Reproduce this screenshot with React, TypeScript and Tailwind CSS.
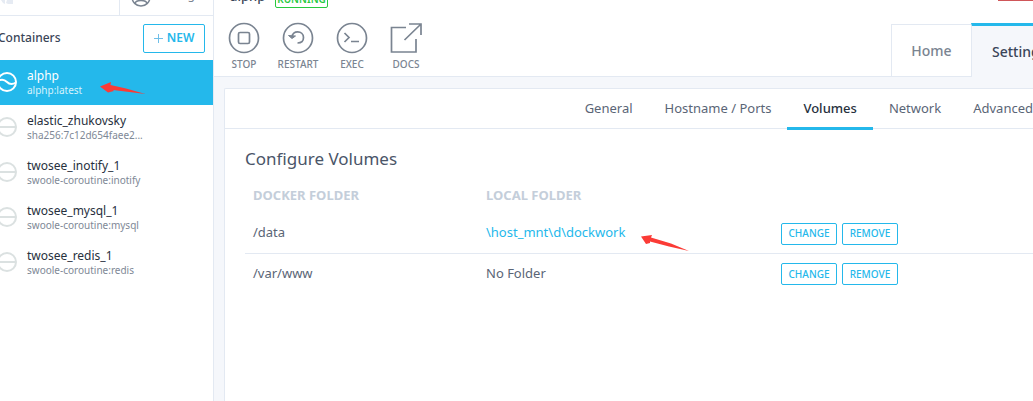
import React from "react";

type Container = { name: string; image: string };

const containers: Container[] = [
  { name: "alphp", image: "alphp:latest" },
  { name: "elastic_zhukovsky", image: "sha256:7c12d654faee2..." },
  { name: "twosee_inotify_1", image: "swoole-coroutine:inotify" },
  { name: "twosee_mysql_1", image: "swoole-coroutine:mysql" },
  { name: "twosee_redis_1", image: "swoole-coroutine:redis" },
];

const volumes = [
  { docker: "/data", local: "\\host_mnt\\d\\dockwork" },
  { docker: "/var/www", local: null },
];

function StateIcon({ running }: { running: boolean }) {
  return (
    <svg width="20" height="20" viewBox="0 0 20 20" fill="none" stroke={running ? "#ffffff" : "#dbe1e1"} strokeWidth="2" className="-ml-[3px] shrink-0" aria-hidden="true">
      <circle cx="10" cy="10" r="9" />
      <path d={running ? "M1 9C5 6.500 7.500 7.500 10 10S15.500 12.500 19 10.500" : "M1 10H19"} />
    </svg>
  );
}

function ActionIcon({ kind }: { kind: string }) {
  return (
    <svg width="32" height="32" viewBox="0 0 32 32" fill="none" stroke="#7a8491" strokeWidth="1.700" aria-hidden="true">
      {kind !== "DOCS" && <circle cx="16" cy="16" r="14.500" />}
      {kind === "STOP" && <rect x="10.500" y="10.500" width="11" height="11" rx="1.500" />}
      {kind === "RESTART" && (
        <>
          <path d="M10 15C10 8 21.500 8 21.500 15.500C21.500 19 19 21 15.500 21" />
          <path d="M6.500 13.500L10 16.500L13.500 14Z" fill="#7a8491" strokeWidth="1" />
        </>
      )}
      {kind === "EXEC" && <path d="M8.500 11L13 15.500L8.500 20M15 19.500H23" />}
      {kind === "DOCS" && <path d="M16 5.500H1.500V30H26V17M19 2H31V13M30.500 2.500L14.500 18" />}
    </svg>
  );
}

function Arrow({ className, points, viewBox, width, height }: { className: string; points: string; viewBox: string; width: number; height: number }) {
  return (
    <svg className={className} width={width} height={height} viewBox={viewBox} aria-hidden="true">
      <polygon points={points} fill="#fb3b36" />
    </svg>
  );
}

function Sidebar() {
  return (
    <aside className="flex w-[214px] shrink-0 flex-col border-r border-[#e3e9f2] bg-white">
      <div className="flex h-4 items-end overflow-hidden border-b border-[#e3e9f2]">
        <div className="h-full w-[119px]">
          <svg width="14" height="5" viewBox="0 0 14 5" fill="#e6ebf3" aria-hidden="true">
            <path d="M1 0H5V4L3 3ZM7 0H13V4H8L6 3Z" />
          </svg>
        </div>
        <a href="#account" className="flex h-full flex-1 items-end border-l border-[#e3e9f2] pb-2 pl-[11px] text-[12px] leading-5 text-[#7a8491]">
          <svg width="20" height="20" viewBox="0 0 20 20" fill="none" stroke="#7a8491" strokeWidth="1.500" aria-hidden="true">
            <circle cx="10" cy="10" r="9" />
            <path d="M4 17C4 14 7 13.500 10 13.500S16 14 16 17" />
          </svg>
          <span className="pb-0.5 pl-1">Settings</span>
        </a>
      </div>
      <div className="flex h-11 items-center justify-between pr-2">
        <h2 className="-ml-0.5 text-[12px] font-medium text-[#3a4558]">Containers</h2>
        <button type="button" className="flex h-[29px] w-[62px] items-center justify-center gap-1 rounded-xs border border-[#24b8eb] text-[12px] font-semibold text-[#24b8eb]">
          <svg width="9" height="9" viewBox="0 0 9 9" stroke="#6fbfe8" aria-hidden="true">
            <path d="M4.500 0V9M0 4.500H9" />
          </svg>
          NEW
        </button>
      </div>
      <ul>
        {containers.map((c, i) => (
          <li key={c.name} className={i === 0 ? "relative bg-[#24b8eb]" : ""}>
            <a href={"#" + c.name} className="flex h-[45px] items-center gap-2.5 pb-0.5">
              <StateIcon running={i === 0} />
              <span className="flex flex-col pt-[3px]">
                <span className={"text-[12px] leading-[15px] " + (i === 0 ? "text-white" : "text-[#27303d]")}>{c.name}</span>
                <span className={"text-[10px] leading-[15px] " + (i === 0 ? "text-[#d6f2fc]" : "text-[#7e8896]")}>{c.image}</span>
              </span>
            </a>
            {i === 0 && <Arrow className="absolute left-[100px] top-[22px]" width={46} height={13} viewBox="0 0 46 13" points="0,4.500 11,0 10.500,3 26,6.500 45.500,12 13,8 14,9 8,10.500" />}
          </li>
        ))}
      </ul>
    </aside>
  );
}

function Header() {
  return (
    <header className="relative flex h-[77px] justify-between border-b border-[#e3e9f2] bg-white">
      <div className="-mt-3">
        <div className="flex h-5 items-end gap-2.5 pl-4">
          <h1 className="pb-0.5 text-[13px] font-medium leading-5 text-[#3a4558]">alphp</h1>
          <span className="rounded-xs border border-[#27c93f] px-px text-[10px] font-semibold leading-4 text-[#27c93f]">RUNNING</span>
        </div>
        <div className="flex pl-[3px] pt-3.5">
          {["STOP", "RESTART", "EXEC", "DOCS"].map((label) => (
            <button type="button" key={label} className="flex w-[54px] flex-col items-center gap-0.5 text-[10px] font-medium leading-4 text-[#7a8491]">
              <ActionIcon kind={label} />
              {label}
            </button>
          ))}
        </div>
      </div>
      <div className="absolute right-0 top-0 h-px w-[35px] bg-[#cf5659]" />
      <div className="flex items-end text-[14px] font-medium">
        <a href="#home" className="flex h-[52px] w-20 items-center justify-center border-l border-t border-[#e3e9f2] text-[#7a8491]">Home</a>
        <a href="#settings" className="-mb-px flex h-[54px] w-[62px] items-center overflow-hidden border-l border-t-3 border-l-[#e3e9f2] border-t-[#24b8eb] bg-[#f5f7fb] pl-5 text-[#3a4558]">Settings</a>
      </div>
    </header>
  );
}

function Volumes() {
  return (
    <section className="flex-1 pl-5 pt-5">
      <h2 className="text-[17px] leading-5 text-[#4a5568]">Configure Volumes</h2>
      <table className="mt-2.5 w-full table-fixed text-left text-[13px] text-[#5a6576]">
        <colgroup>
          <col className="w-[233px]" />
          <col className="w-[295px]" />
          <col />
        </colgroup>
        <thead>
          <tr className="h-[34px] text-[#c4ceda]">
            <th className="pl-2 font-bold">DOCKER FOLDER</th>
            <th className="pl-2 font-bold">LOCAL FOLDER</th>
            <th aria-label="Actions" />
          </tr>
        </thead>
        <tbody>
          {volumes.map((v, i) => (
            <tr key={v.docker} className={"h-10 " + (i === 0 ? "border-b border-[#e3e9f2]" : "")}>
              <td className="pl-2">{v.docker}</td>
              <td className="pl-2">
                {v.local ? (
                  <span className="relative inline-block">
                    <a href="#folder" className="text-[#24b8eb]">{v.local}</a>
                    <Arrow className="absolute left-[155px] top-3" width={48} height={17} viewBox="0 0 48 17" points="0,1.500 11,0 10,2.500 30,8.500 48,16 28,11.500 9,6.500 9,8 5,9" />
                  </span>
                ) : (
                  "No Folder"
                )}
              </td>
              <td className="pl-2">
                <div className="flex gap-[5px] pt-0.5">
                  {["CHANGE", "REMOVE"].map((b) => (
                    <button type="button" key={b} className="h-[22px] w-14 rounded-xs border border-[#24b8eb] text-[10px] font-medium text-[#24b8eb]">{b}</button>
                  ))}
                </div>
              </td>
            </tr>
          ))}
        </tbody>
      </table>
    </section>
  );
}

const tabs = ["General", "Hostname / Ports", "Volumes", "Network", "Advanced"];

export default function App() {
  return (
    <div className="flex min-h-screen overflow-hidden bg-white font-['Noto_Sans',sans-serif]">
      <Sidebar />
      <main className="flex min-w-0 flex-1 flex-col bg-[#f5f7fb]">
        <Header />
        <div className="ml-2.5 mt-[11px] flex flex-1 flex-col rounded-tl-xs border-l border-t border-[#e3e9f2] bg-white">
          <nav className="flex h-10 justify-end border-b border-[#e3e9f2] text-[13px] text-[#5a6576]">
            <div className="-mb-0.5 -mr-4 flex">
              {tabs.map((t) => (
                <a key={t} href={"#" + t} className={"flex items-center border-b-3 px-4 pt-0.5 " + (t === "Volumes" ? "border-[#24b8eb] font-medium text-[#27303d]" : "border-transparent")}>{t}</a>
              ))}
            </div>
          </nav>
          <Volumes />
        </div>
      </main>
    </div>
  );
}
